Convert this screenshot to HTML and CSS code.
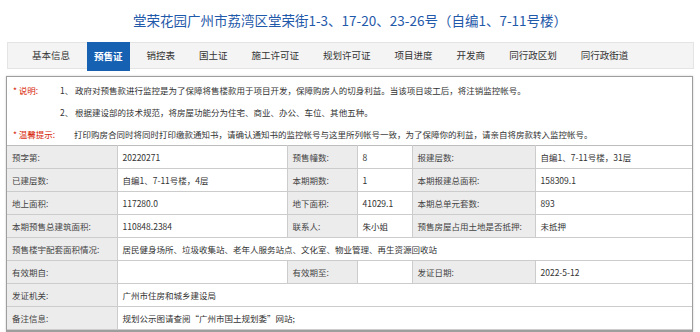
FILE: index.html
```html
<!DOCTYPE html>
<html lang="zh-CN">
<head>
    <meta charset="UTF-8">
    <meta name="viewport" content="width=device-width, initial-scale=1.0">
    <title>预售证</title>
    <link rel="stylesheet" href="styles.css">
</head>
<body>
<h1 class="title">堂荣花园广州市荔湾区堂荣街1-3、17-20、23-26号（自编1、7-11号楼）</h1>

<div class="tabs">
    <a class="tab">基本信息</a>
    <a class="tab active">预售证</a>
    <a class="tab">销控表</a>
    <a class="tab">国土证</a>
    <a class="tab">施工许可证</a>
    <a class="tab">规划许可证</a>
    <a class="tab">项目进度</a>
    <a class="tab">开发商</a>
    <a class="tab">同行政区划</a>
    <a class="tab">同行政街道</a>
</div>

<div class="panel">
    <div class="notes">
        <div class="note">
            <span class="tip tip-short">* 说明:</span>
            <span>1、 政府对预售款进行监控是为了保障将售楼款用于项目开发，保障购房人的切身利益。当该项目竣工后，将注销监控帐号。</span>
        </div>
        <div class="note note-indent">
            <span>2、 根据建设部的技术规范，将房屋功能分为住宅、商业、办公、车位、其他五种。</span>
        </div>
        <div class="note">
            <span class="tip tip-long">* 温馨提示:</span>
            <span>打印购房合同时将同时打印缴款通知书，请确认通知书的监控帐号与这里所列帐号一致，为了保障你的利益，请亲自将房款转入监控帐号。</span>
        </div>
    </div>

    <table class="info">
        <colgroup>
            <col class="c1"><col class="c2"><col class="c3"><col class="c4"><col class="c5"><col class="c6">
        </colgroup>
        <tr>
            <th>预字第:</th><td>20220271</td>
            <th>预售幢数:</th><td>8</td>
            <th>报建层数:</th><td>自编1、7-11号楼，31层</td>
        </tr>
        <tr>
            <th>已建层数:</th><td>自编1、7-11号楼，4层</td>
            <th>本期期数:</th><td>1</td>
            <th>本期报建总面积:</th><td>158309.1</td>
        </tr>
        <tr>
            <th>地上面积:</th><td>117280.0</td>
            <th>地下面积:</th><td>41029.1</td>
            <th>本期总单元套数:</th><td>893</td>
        </tr>
        <tr>
            <th>本期预售总建筑面积:</th><td>110848.2384</td>
            <th>联系人:</th><td>朱小姐</td>
            <th>预售房屋占用土地是否抵押:</th><td>未抵押</td>
        </tr>
        <tr>
            <th>预售楼宇配套面积情况:</th>
            <td colspan="5">居民健身场所、垃圾收集站、老年人服务站点、文化室、物业管理、再生资源回收站</td>
        </tr>
        <tr>
            <th>有效期自:</th><td></td>
            <th>有效期至:</th><td></td>
            <th>发证日期:</th><td>2022-5-12</td>
        </tr>
        <tr>
            <th>发证机关:</th>
            <td colspan="5">广州市住房和城乡建设局</td>
        </tr>
        <tr>
            <th>备注信息:</th>
            <td colspan="5">规划公示图请查阅“广州市国土规划委”网站;</td>
        </tr>
    </table>
</div>
</body>
</html>
```

FILE: styles.css
```css
* {
    margin: 0;
    padding: 0;
    box-sizing: border-box;
}

body {
    font-family: "Noto Sans CJK SC", "Noto Sans", sans-serif;
    background: #ffffff;
    color: #333333;
    width: 700px;
    overflow: hidden;
}

.title {
    height: 42px;
    line-height: 40px;
    text-align: center;
    font-size: 13.5px;
    font-weight: normal;
    color: #1f59a9;
}

/* tab bar */
.tabs {
    display: flex;
    align-items: flex-start;
    height: 27px;
    margin: 0 6px 0 7px;
    padding-left: 12px;
    background: #f4f4f4;
    border: 1px solid #e4e4e4;
}

.tab {
    height: 25px;
    line-height: 25px;
    padding: 0 7px;
    margin: 0 5px;
    font-size: 9.5px;
    color: #333333;
    cursor: pointer;
}

.tab.active {
    height: 29px;
    line-height: 29px;
    margin-top: -1px;
    background: #1761b3;
    color: #ffffff;
    font-weight: bold;
}

/* content panel */
.panel {
    margin: 7px 7px 0 6px;
    border: 1px solid #9e9e9e;
    border-bottom-width: 2px;
    box-shadow: 0 0 2px rgba(0, 0, 0, 0.2);
}

.notes {
    padding: 2px 0 0 6px;
    font-size: 8.5px;
}

.note {
    display: flex;
    height: 22px;
    line-height: 22px;
    white-space: nowrap;
}

.note-indent {
    padding-left: 47px;
}

.tip {
    color: #d81e06;
}

.tip-short {
    width: 47px;
}

.tip-long {
    width: 61px;
}

/* info table */
.info {
    width: 100%;
    border-collapse: collapse;
    table-layout: fixed;
    font-size: 8.5px;
}

.c1 { width: 110px; }
.c2 { width: 170px; }
.c3 { width: 70px; }
.c4 { width: 55px; }
.c5 { width: 123px; }
.c6 { width: auto; }

.info th,
.info td {
    height: 23px;
    padding: 0 5px;
    border: 1px solid #cccccc;
    text-align: left;
    font-weight: normal;
    white-space: nowrap;
    overflow: hidden;
}

.info th {
    background: #ececec;
    color: #444444;
}

.info tr:first-child th,
.info tr:first-child td {
    border-top-color: #bdbdbd;
}

.info tr th:first-child {
    border-left: none;
}

.info tr td:last-child {
    border-right: none;
}
```
